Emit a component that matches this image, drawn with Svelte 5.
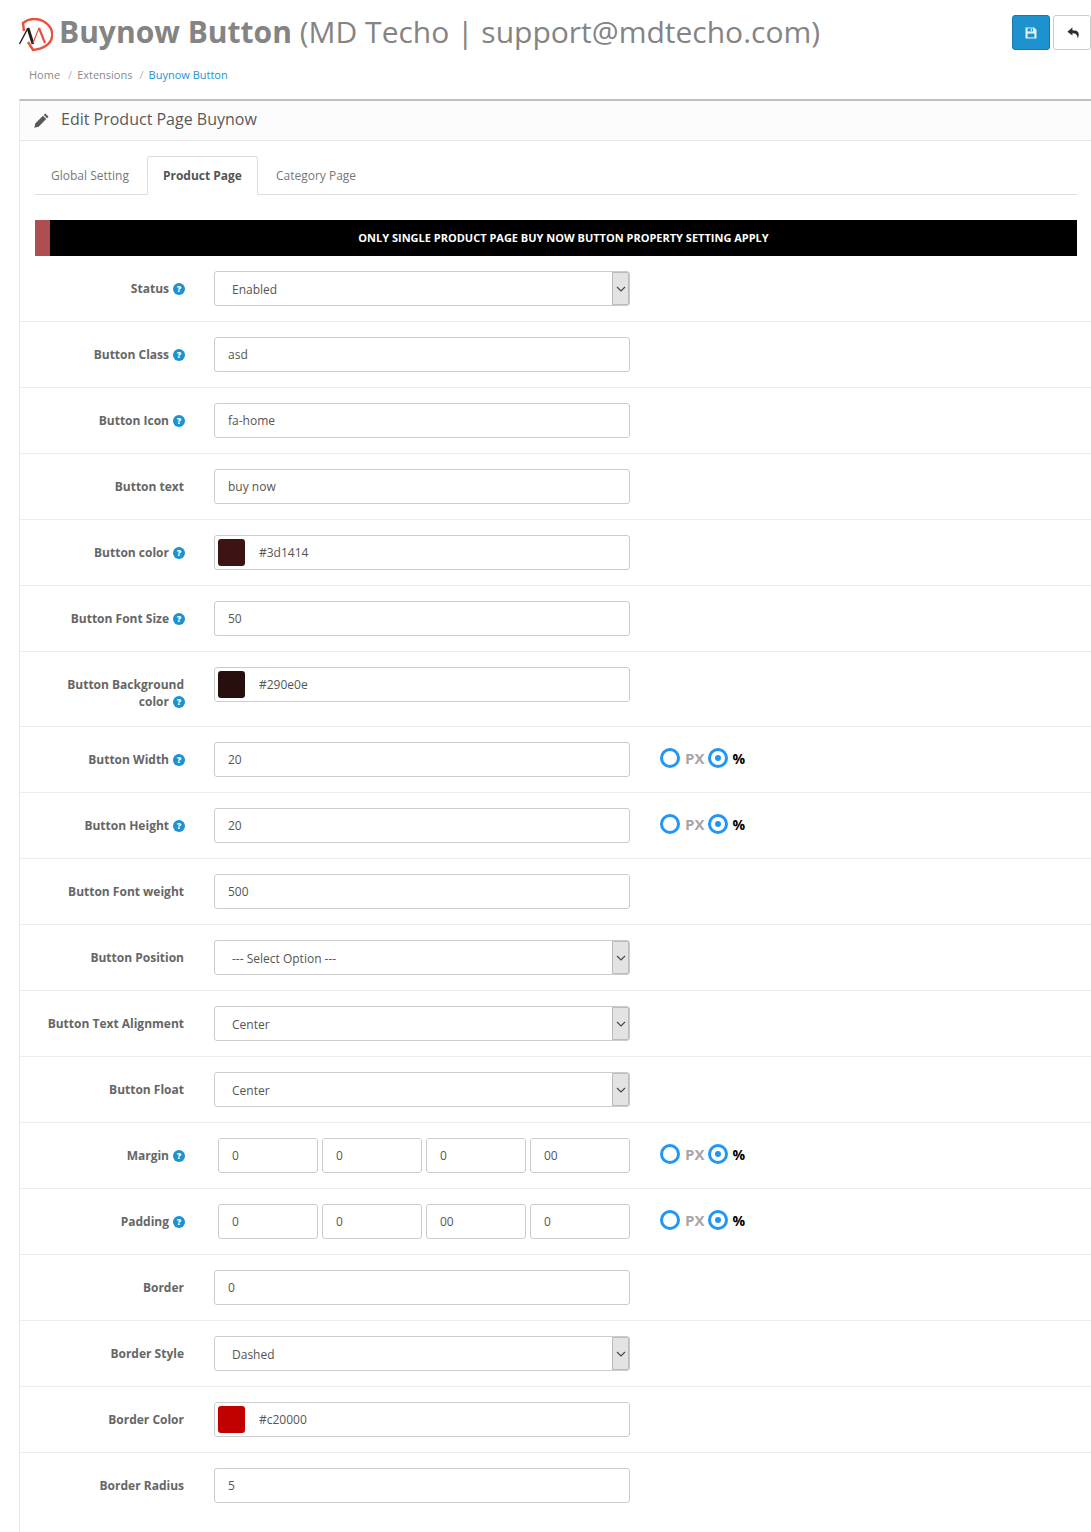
<script>
  const rows = [
    { label: 'Status', help: true, type: 'select', value: 'Enabled' },
    { label: 'Button Class', help: true, type: 'text', value: 'asd' },
    { label: 'Button Icon', help: true, type: 'text', value: 'fa-home' },
    { label: 'Button text', type: 'text', value: 'buy now' },
    { label: 'Button color', help: true, type: 'color', value: '#3d1414' },
    { label: 'Button Font Size', help: true, type: 'text', value: '50' },
    { label: 'Button Background color', help: true, type: 'color', value: '#290e0e', tall: true },
    { label: 'Button Width', help: true, type: 'text', value: '20', unit: true },
    { label: 'Button Height', help: true, type: 'text', value: '20', unit: true },
    { label: 'Button Font weight', type: 'text', value: '500' },
    { label: 'Button Position', type: 'select', value: '--- Select Option ---' },
    { label: 'Button Text Alignment', type: 'select', value: 'Center' },
    { label: 'Button Float', type: 'select', value: 'Center' },
    { label: 'Margin', help: true, type: 'quad', values: ['0', '0', '0', '00'], unit: true },
    { label: 'Padding', help: true, type: 'quad', values: ['0', '0', '00', '0'], unit: true },
    { label: 'Border', type: 'text', value: '0' },
    { label: 'Border Style', type: 'select', value: 'Dashed' },
    { label: 'Border Color', type: 'color', value: '#c20000' },
    { label: 'Border Radius', type: 'text', value: '5' }
  ];
</script>

<div class="page">
  <header class="top">
    <div class="title-line">
      <svg class="logo" width="34" height="34" viewBox="0 0 34 34">
        <path d="M5 13 L4 5 C10 0 18 0 24 3 C31 7 34 13 33 19 C32 26 24 31 14 32 L9 24" fill="none" stroke="#e8513f" stroke-width="2.4" />
        <path d="M0.5 26 L9 10" fill="none" stroke="#222" stroke-width="1.4" />
        <path d="M9 10 L14 26" fill="none" stroke="#222" stroke-width="2.8" />
        <path d="M14 25 L20 10" fill="none" stroke="#e8513f" stroke-width="1.2" />
        <path d="M20 10 L26 25" fill="none" stroke="#e8513f" stroke-width="2.2" />
      </svg>
      <h1><strong>Buynow Button</strong> (MD Techo | support@mdtecho.com)</h1>
      <div class="actions">
        <button class="btn primary" aria-label="Save">
          <svg width="12" height="12" viewBox="0 0 12 12">
            <path d="M0.5 0.5h8.7l2.3 2.3v8.7h-11z" fill="#e3f1f9" />
            <rect x="2.6" y="1.4" width="5.4" height="3" fill="#1e91cf" />
            <rect x="5.8" y="1.8" width="1.3" height="2.1" fill="#e3f1f9" />
            <rect x="2.6" y="6.6" width="6.8" height="3.8" fill="#1e91cf" />
          </svg>
        </button>
        <button class="btn plain" aria-label="Back">
          <svg class="back" width="13" height="12" viewBox="0 0 13 12">
            <path d="M5.4 0.6 L0.4 4.7 L5.4 8.6 V6.2 C8.6 6.2 10.2 7.2 10.8 11.4 C13 6.4 11.8 3.2 5.4 3.2 Z" fill="#2e2e2e" />
          </svg>
        </button>
      </div>
    </div>
    <nav class="crumbs">
      <span>Home</span><i>/</i><span>Extensions</span><i>/</i><span class="current">Buynow Button</span>
    </nav>
  </header>

  <section class="panel">
    <div class="panel-head">
      <svg width="15" height="15" viewBox="0 0 14 14">
        <path d="M10.6 0.4 L13.6 3.4 L12.2 4.9 L9.1 1.8 Z M8.3 2.6 L11.4 5.7 L4.3 12.8 L0.3 13.7 L1.2 9.7 Z" fill="#595959" />
      </svg>
      <h2>Edit Product Page Buynow</h2>
    </div>
    <div class="panel-body">
      <ul class="tabs">
        <li>Global Setting</li>
        <li class="active">Product Page</li>
        <li>Category Page</li>
      </ul>
      <div class="notice">ONLY SINGLE PRODUCT PAGE BUY NOW BUTTON PROPERTY SETTING APPLY</div>
    </div>

    {#each rows as row}
      <div class="row" class:tall={row.tall}>
        <div class="label">
          <span>{row.label}{#if row.help}<b class="help">?</b>{/if}</span>
        </div>
        <div class="field">
          {#if row.type === 'select'}
            <div class="input select">
              <span>{row.value}</span>
              <span class="caret">
                <svg width="10" height="6" viewBox="0 0 10 6"><path d="M1 1 L5 5 L9 1" fill="none" stroke="#444" stroke-width="1.1" /></svg>
              </span>
            </div>
          {:else if row.type === 'color'}
            <div class="input color">
              <span class="swatch" style="background:{row.value}"></span>
              <span>{row.value}</span>
            </div>
          {:else if row.type === 'quad'}
            <div class="quad">
              {#each row.values as v}
                <div class="input">{v}</div>
              {/each}
            </div>
          {:else}
            <div class="input">{row.value}</div>
          {/if}
        </div>
        {#if row.unit}
          <div class="units">
            <span class="radio"></span><span class="px">PX</span>
            <span class="radio on"></span><span class="pct">%</span>
          </div>
        {/if}
      </div>
    {/each}
  </section>
</div>

<style>
  :global(body) {
    margin: 0;
    background: #fff;
    font-family: "Open Sans", sans-serif;
    font-size: 12px;
    color: #666;
  }
  .page {
    width: 1091px;
    height: 1532px;
    overflow: hidden;
  }
  .top {
    padding-left: 19px;
    height: 99px;
    box-sizing: border-box;
  }
  .title-line {
    display: flex;
    align-items: flex-start;
    height: 67px;
  }
  .logo {
    margin-top: 18px;
    margin-right: 6px;
    flex: none;
  }
  h1 {
    margin: 10px 0 0;
    font-size: 30px;
    line-height: 43px;
    font-weight: 400;
    color: #848484;
    white-space: nowrap;
  }
  h1 strong {
    font-weight: 700;
  }
  .actions {
    margin-left: auto;
    margin-top: 15px;
    display: flex;
    gap: 3px;
  }
  .btn {
    height: 35px;
    padding: 0;
    border-radius: 3px;
    display: flex;
    align-items: center;
    justify-content: center;
  }
  .primary {
    width: 38px;
    background: #1e91cf;
    border: 1px solid #1978ab;
  }
  .plain {
    width: 38px;
    background: #fff;
    border: 1px solid #ccc;
  }
  .back {
    margin-left: 2px;
  }
  .crumbs {
    padding-left: 10px;
    display: flex;
    align-items: center;
    font-size: 11px;
    line-height: 16px;
    color: #8a8a8a;
  }
  .crumbs i {
    font-style: normal;
    color: #b5b5b5;
    margin: 0 5px 0 8px;
  }
  .crumbs span:nth-of-type(2) {
    margin-right: -1px;
  }
  .crumbs .current {
    color: #1e91cf;
  }
  .panel {
    margin-left: 19px;
    border-top: 2px solid #bfbfbf;
    border-left: 1px solid #e8e8e8;
    padding-bottom: 30px;
  }
  .panel-head {
    height: 39px;
    background: #fcfcfc;
    border-bottom: 1px solid #e8e8e8;
    display: flex;
    align-items: center;
    padding-left: 14px;
  }
  h2 {
    margin: -3px 0 0 12px;
    font-size: 16px;
    font-weight: 400;
    color: #595959;
  }
  .panel-body {
    padding: 15px 14px 0 15px;
  }
  .tabs {
    list-style: none;
    margin: 0 0 25px;
    padding: 0;
    height: 38px;
    display: flex;
    border-bottom: 1px solid #ddd;
  }
  .tabs li {
    height: 38px;
    box-sizing: border-box;
    padding: 0 16px;
    font-size: 12px;
    line-height: 39px;
    color: #777;
    margin-right: 2px;
  }
  .tabs .active {
    background: #fff;
    border: 1px solid #ddd;
    border-bottom: 1px solid #fff;
    border-radius: 3px 3px 0 0;
    height: 39px;
    font-weight: 700;
    color: #555;
    line-height: 38px;
    padding: 0 15px;
  }
  .notice {
    height: 36px;
    background: #000;
    border-left: 15px solid #ad4f50;
    color: #fff;
    font-size: 11px;
    font-weight: 700;
    line-height: 36px;
    text-align: center;
  }
  .row {
    display: flex;
    align-items: flex-start;
    padding: 15px 0;
    border-bottom: 1px solid #ededed;
    min-height: 35px;
  }
  .row:last-child {
    border-bottom: none;
  }
  .row.tall {
    min-height: 44px;
  }
  .label {
    width: 149px;
    margin-left: 15px;
    flex: none;
    text-align: right;
    font-size: 12px;
    font-weight: 700;
    line-height: 17px;
    color: #666;
    padding-top: 9px;
  }
  .help {
    display: inline-block;
    width: 12px;
    height: 12px;
    margin-left: 4px;
    margin-right: -1px;
    border-radius: 50%;
    background: #1e91cf;
    color: #fff;
    font-size: 9px;
    line-height: 12px;
    text-align: center;
    vertical-align: 1px;
  }
  .field {
    width: 416px;
    margin-left: 30px;
    flex: none;
  }
  .input {
    height: 35px;
    box-sizing: border-box;
    border: 1px solid #ccc;
    border-radius: 3px;
    background: #fff;
    padding: 0 13px;
    font-size: 12px;
    line-height: 33px;
    color: #555;
  }
  .select {
    display: flex;
    justify-content: space-between;
    padding: 1px 0 0 17px;
    position: relative;
  }
  .caret {
    position: absolute;
    top: 0;
    right: 0;
    width: 17px;
    height: 33px;
    box-sizing: border-box;
    background: #e3e3e3;
    border: 1px solid #bbb;
    border-radius: 0 2px 2px 0;
    display: flex;
    align-items: center;
    justify-content: center;
  }
  .color {
    display: flex;
    align-items: center;
    padding: 0 0 0 3px;
  }
  .swatch {
    width: 27px;
    height: 27px;
    border-radius: 3px;
    margin-right: 14px;
  }
  .quad {
    display: flex;
    gap: 4px;
    padding-left: 4px;
  }
  .quad .input {
    width: 100px;
    padding-left: 13px;
  }
  .units {
    margin-left: 30px;
    margin-top: 6px;
    display: flex;
    align-items: center;
    height: 20px;
    font-size: 15px;
    font-weight: 700;
  }
  .radio {
    width: 20px;
    height: 20px;
    box-sizing: border-box;
    border: 3px solid #2196f3;
    border-radius: 50%;
    background: #fff;
    position: relative;
  }
  .radio.on::after {
    content: "";
    position: absolute;
    left: 4px;
    top: 4px;
    width: 6px;
    height: 6px;
    border-radius: 50%;
    background: #2196f3;
  }
  .px {
    color: #a6a6a6;
    margin: 0 4px 0 5px;
  }
  .pct {
    color: #000;
    margin-left: 4px;
    font-size: 14px;
  }
</style>
